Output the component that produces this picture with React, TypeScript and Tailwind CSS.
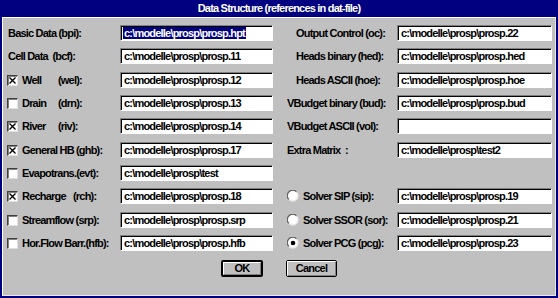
import type { ReactNode } from "react";

// Windows 3.x style dialog: "Data Structure (references in dat-file)"

type LeftRow = {
  label?: string;
  check?: boolean;
  name?: string;
  abbr?: string;
  nameW?: string;
  value: string;
  selected?: boolean;
  mt: string;
};

type RightRow = {
  label?: string;
  indent?: string;
  radio?: boolean;
  value?: string;
};

const leftRows: LeftRow[] = [
  { label: "Basic Data (bpi):", value: "c:\\modelle\\prosp\\prosp.hpt", selected: true, mt: "mt-[7px]" },
  { label: "Cell Data  (bcf):", value: "c:\\modelle\\prosp\\prosp.11", mt: "mt-[7px]" },
  { check: true, name: "Well", abbr: "(wel):", nameW: "min-w-[36px]", value: "c:\\modelle\\prosp\\prosp.12", mt: "mt-[8px]" },
  { check: false, name: "Drain", abbr: "(drn):", nameW: "min-w-[36px]", value: "c:\\modelle\\prosp\\prosp.13", mt: "mt-[7px]" },
  { check: true, name: "River", abbr: "(riv):", nameW: "min-w-[36px]", value: "c:\\modelle\\prosp\\prosp.14", mt: "mt-[7px]" },
  { check: true, name: "General HB", abbr: "(ghb):", nameW: "min-w-[54px]", value: "c:\\modelle\\prosp\\prosp.17", mt: "mt-[8px]" },
  { check: false, name: "Evapotrans.", abbr: "(evt):", nameW: "min-w-[54px]", value: "c:\\modelle\\prosp\\test", mt: "mt-[7px]" },
  { check: true, name: "Recharge", abbr: "(rch):", nameW: "min-w-[51px]", value: "c:\\modelle\\prosp\\prosp.18", mt: "mt-[7px]" },
  { check: false, name: "Streamflow", abbr: " (srp):", nameW: "", value: "c:\\modelle\\prosp\\prosp.srp", mt: "mt-[8px]" },
  { check: false, name: "Hor.Flow Barr.", abbr: "(hfb):", nameW: "", value: "c:\\modelle\\prosp\\prosp.hfb", mt: "mt-[7px]" },
];

const rightRows: RightRow[] = [
  { label: "Output Control (oc):", indent: "pl-[9px]", value: "c:\\modelle\\prosp\\prosp.22" },
  { label: "Heads binary (hed):", indent: "pl-[9px]", value: "c:\\modelle\\prosp\\prosp.hed" },
  { label: "Heads ASCII (hoe):", indent: "pl-[9px]", value: "c:\\modelle\\prosp\\prosp.hoe" },
  { label: "VBudget binary (bud):", indent: "pl-0", value: "c:\\modelle\\prosp\\prosp.bud" },
  { label: "VBudget ASCII (vol):", indent: "pl-0", value: "" },
  { label: "Extra Matrix  :", indent: "pl-0", value: "c:\\modelle\\prosp\\test2" },
  {},
  { label: "Solver SIP (sip):", radio: false, value: "c:\\modelle\\prosp\\prosp.19" },
  { label: "Solver SSOR (sor):", radio: false, value: "c:\\modelle\\prosp\\prosp.21" },
  { label: "Solver PCG (pcg):", radio: true, value: "c:\\modelle\\prosp\\prosp.23" },
];

function Field({ value, selected, width }: { value: string; selected?: boolean; width: string }) {
  return (
    <div
      className={`${width} h-[16px] shrink-0 bg-white border border-t-[#808080] border-l-[#808080] border-r-white border-b-white shadow-[inset_1px_1px_0_#000] flex items-center pl-[2px] overflow-hidden`}
    >
      {selected ? (
        <span className="bg-[#000080] text-white leading-[12px] px-[1px] whitespace-pre">{value}</span>
      ) : (
        <span className="text-black px-[1px] whitespace-pre">{value}</span>
      )}
    </div>
  );
}

function CheckBox({ checked }: { checked: boolean }) {
  return (
    <div className="w-[11px] h-[11px] shrink-0 bg-white border border-t-[#404040] border-l-[#404040] border-r-[#e0e0e0] border-b-[#e0e0e0] shadow-[inset_1px_1px_0_#808080]">
      {checked && (
        <svg width="9" height="9" viewBox="0 0 9 9" className="block">
          <path d="M1.5 1.5 L7.5 7.5 M7.5 1.5 L1.5 7.5" stroke="#000" strokeWidth="1.4" />
        </svg>
      )}
    </div>
  );
}

function Radio({ on }: { on: boolean }) {
  return (
    <svg width="12" height="12" viewBox="0 0 12 12" className="shrink-0 block">
      <circle cx="6" cy="6" r="5" fill="#fff" />
      <path d="M1.8 9.5 A5 5 0 0 1 9.5 1.8" fill="none" stroke="#606060" strokeWidth="1.2" />
      <path d="M9.5 1.8 A5 5 0 0 1 1.8 9.5" fill="none" stroke="#e8e8e8" strokeWidth="1.2" />
      {on && <circle cx="6" cy="6" r="2.3" fill="#000" />}
    </svg>
  );
}

function Button({ children, isDefault, width }: { children: ReactNode; isDefault?: boolean; width: string }) {
  return (
    <button
      type="button"
      className={`${width} h-[17px] ${isDefault ? "border-2" : "border"} border-black rounded-[2px] bg-[#c0c0c0] flex items-center justify-center`}
    >
      <span className="w-full h-full flex items-center justify-center border border-t-white border-l-white border-r-[#808080] border-b-[#808080] text-black">
        {children}
      </span>
    </button>
  );
}

export default function App() {
  return (
    <div
      className="w-[558px] h-[298px] bg-[#000080] flex flex-col px-[2px] pb-[2px] font-bold text-[11px] leading-[13px] tracking-[-0.8px] text-black"
      style={{ fontFamily: '"Liberation Sans", Arial, sans-serif' }}
    >
      <div className="h-[17px] shrink-0 flex items-center justify-center text-white">
        Data Structure (references in dat-file)
      </div>
      <div className="flex-1 bg-[#c0c0c0] border border-t-white border-l-white border-r-[#e8e8e8] border-b-[#e8e8e8] flex flex-col">
        {leftRows.map((row, i) => {
          const r = rightRows[i];
          return (
            <div key={i} className={`${row.mt} h-[16px] flex items-center`}>
              <div className="w-[117px] shrink-0 pl-[4px] flex items-center whitespace-pre">
                {row.label !== undefined ? (
                  <span className="pl-[1px]">{row.label}</span>
                ) : (
                  <>
                    <CheckBox checked={!!row.check} />
                    <span className={`ml-[4px] ${row.nameW}`}>{row.name}</span>
                    <span>{row.abbr}</span>
                  </>
                )}
              </div>
              <Field value={row.value} selected={row.selected} width="w-[153px]" />
              <div className="w-[14px] shrink-0" />
              {r.label !== undefined && (
                <>
                  <div className="w-[110px] shrink-0 flex items-center whitespace-pre">
                    {r.radio !== undefined ? (
                      <>
                        <Radio on={r.radio} />
                        <span className="ml-[4px]">{r.label}</span>
                      </>
                    ) : (
                      <span className={r.indent}>{r.label}</span>
                    )}
                  </div>
                  <Field value={r.value ?? ""} width="w-[155px]" />
                </>
              )}
            </div>
          );
        })}
        <div className="mt-[9px] flex justify-center gap-[23px]">
          <Button isDefault width="w-[42px]">OK</Button>
          <Button width="w-[51px]">Cancel</Button>
        </div>
      </div>
    </div>
  );
}
